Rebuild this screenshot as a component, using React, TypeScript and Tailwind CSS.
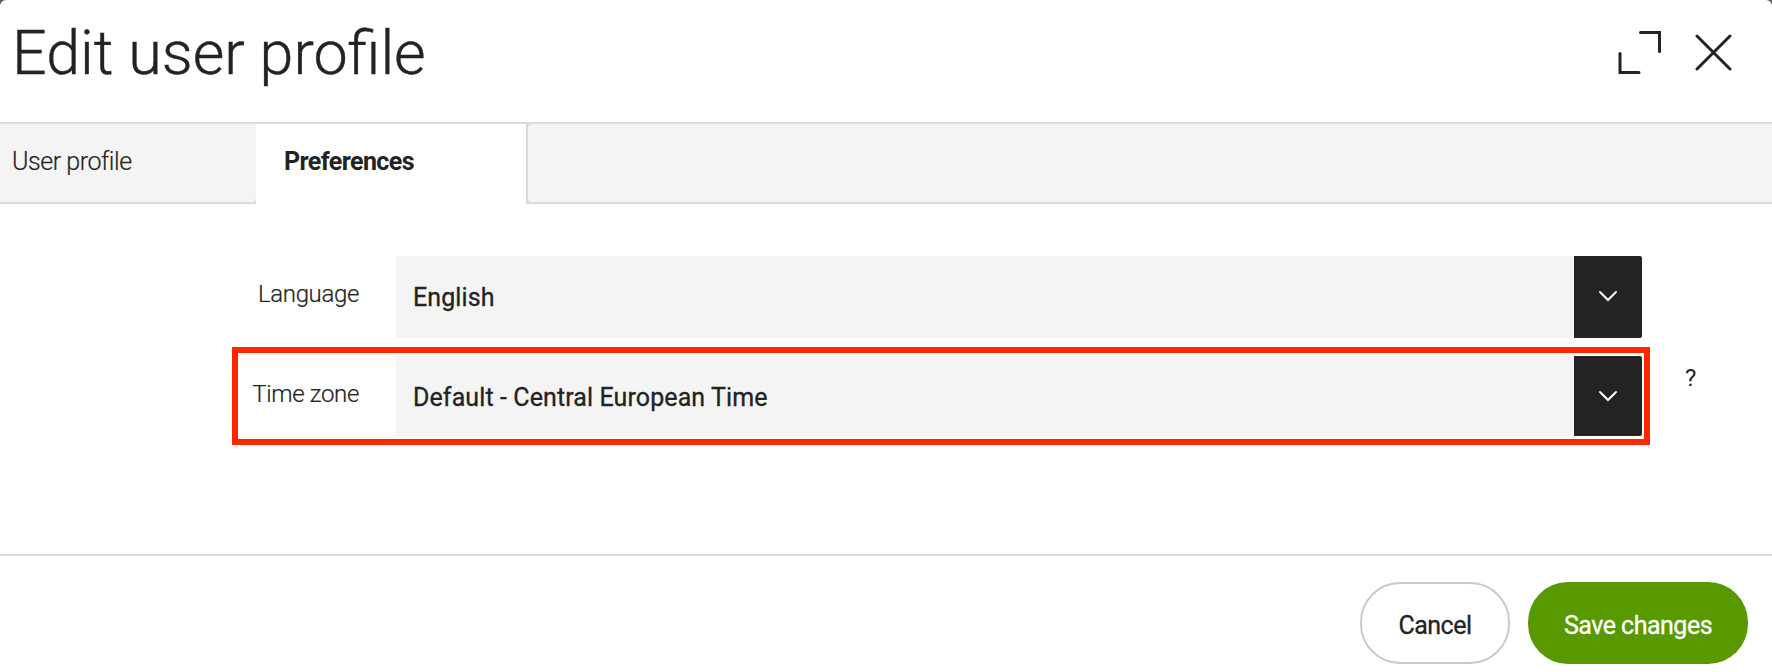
import type { ReactNode } from "react";

function Chevron() {
  return (
    <svg width="20" height="12" viewBox="0 0 20 12" fill="none" stroke="#fff" strokeWidth="2" strokeLinecap="round">
      <path d="M2 2L10 10L18 2" />
    </svg>
  );
}

function Select({ value, className }: { value: string; className: string }) {
  return (
    <div className={`flex w-[1246px] overflow-hidden rounded-xs bg-[#f4f4f4] ${className}`}>
      <span className="flex-1 pl-[17px] text-[25px] leading-[84px] tracking-[0.1px] [-webkit-text-stroke:0.3px_#232323]">{value}</span>
      <button className="flex w-[68px] items-start justify-center bg-[#232323] pt-[34px]" aria-label="Open list">
        <Chevron />
      </button>
    </div>
  );
}

function Label({ children }: { children: ReactNode }) {
  return <label className="w-[396px] pt-[23px] pr-[37px] text-right text-[24px] leading-[30px] font-light tracking-[-0.35px] [-webkit-text-stroke:0.2px_#232323]">{children}</label>;
}

export default function App() {
  return (
    <div className="h-[672px] w-[1772px] bg-[#5a5a5a] font-['Roboto',sans-serif] text-[#232323]">
      <div className="flex h-full flex-col overflow-hidden rounded-t-[6px] bg-white">
        <header className="flex h-[124px] shrink-0 justify-between border-b-2 border-[#dbdbdb] pr-[40px] pl-[12px]">
          <h1 className="pt-[17px] text-[61px] leading-[72px] font-light [-webkit-text-stroke:0.4px_#232323]">Edit user profile</h1>
          <div className="flex gap-[32px] pt-[30px]">
            <svg width="44" height="44" viewBox="0 0 44 44" fill="none" stroke="#232323" strokeWidth="3" strokeLinecap="round">
              <path d="M22.5 2.5H41.5V21.5M2 23.5V42.5H21" />
            </svg>
            <svg width="38" height="44" viewBox="0 0 38 44" fill="none" stroke="#232323" strokeWidth="3" strokeLinecap="round">
              <path d="M3 6L36 39M36 6L3 39" />
            </svg>
          </div>
        </header>

        <nav className="flex h-[80px] shrink-0 bg-[#dbdbdb] text-[25px] leading-[30px]">
          <div className="mb-[2px] w-[256px] rounded-br-[4px] bg-[#f4f4f4] pt-[23px] pl-[12px] font-light tracking-[-0.45px] [-webkit-text-stroke:0.2px_#232323]">User profile</div>
          <div className="w-[270px] bg-white pt-[23px] pl-[28px] font-bold tracking-[-0.6px]">Preferences</div>
          <div className="mb-[2px] ml-[2px] flex-1 rounded-l-[4px] bg-[#f4f4f4]" />
        </nav>

        <main className="flex h-[350px] shrink-0 flex-col gap-[18px] pt-[52px]">
          <div className="flex">
            <Label>Language</Label>
            <Select value="English" className="h-[82px]" />
          </div>
          <div className="relative flex">
            <Label>Time zone</Label>
            <Select value="Default - Central European Time" className="h-[80px]" />
            <span className="ml-[43px] pt-[8px] text-[24px] leading-[28px]">?</span>
            <div className="pointer-events-none absolute -top-[9px] left-[232px] h-[98px] w-[1418px] border-6 border-[#ff2600]" />
          </div>
        </main>

        <footer className="flex flex-1 items-start justify-end gap-[18px] border-t-2 border-[#dbdbdb] pt-[26px] pr-[24px] text-[25px]">
          <button className="h-[82px] w-[150px] rounded-[40px] border-2 border-[#cacaca] pt-[6px] tracking-[-0.5px] [-webkit-text-stroke:0.3px_#232323]">Cancel</button>
          <button className="h-[82px] w-[220px] rounded-[40px] bg-[#589900] pt-[6px] tracking-[-0.5px] text-white [-webkit-text-stroke:0.3px_#fff]">Save changes</button>
        </footer>
      </div>
    </div>
  );
}
